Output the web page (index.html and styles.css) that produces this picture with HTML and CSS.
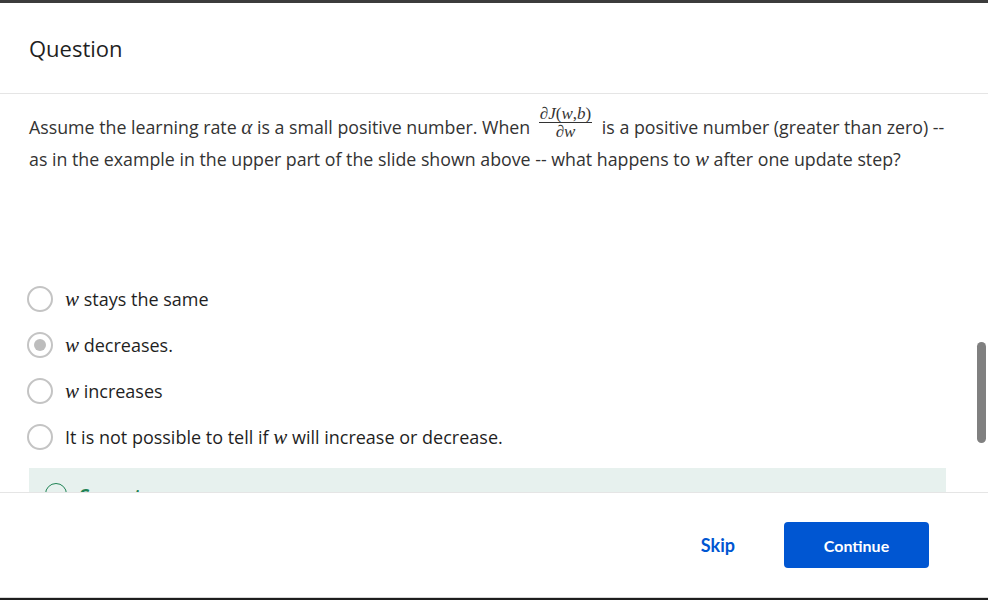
FILE: index.html
```html
<!DOCTYPE html>
<html>
<head>
<meta charset="utf-8">
<link rel="stylesheet" href="styles.css">
</head>
<body>
<div class="topbar"></div>
<div class="modal">
  <header class="modal-head">
    <h1 class="title">Question</h1>
  </header>
  <main class="modal-body">
    <p class="prompt">Assume the learning rate <span class="m">α</span> is a small positive number. When <span class="frac"><span class="num">∂<span class="mi">J</span>(<span class="mi">w</span>,<span class="mi">b</span>)</span><span class="den">∂<span class="mi">w</span></span></span> is a positive number (greater than zero) -- as in the example in the upper part of the slide shown above -- what happens to <span class="m">w</span> after one update step?</p>
    <ul class="options">
      <li class="option"><span class="radio"></span><span class="label"><span class="m">w</span> stays the same</span></li>
      <li class="option"><span class="radio checked"></span><span class="label"><span class="m">w</span> decreases.</span></li>
      <li class="option"><span class="radio"></span><span class="label"><span class="m">w</span> increases</span></li>
      <li class="option"><span class="radio"></span><span class="label">It is not possible to tell if <span class="m">w</span> will increase or decrease.</span></li>
    </ul>
    <div class="feedback">
      <span class="ok-icon"></span><span class="ok-text">Correct</span>
    </div>
    <div class="scroll-thumb"></div>
  </main>
  <footer class="modal-foot">
    <button class="skip">Skip</button>
    <button class="continue">Continue</button>
  </footer>
</div>
<div class="bottombar"></div>
</body>
</html>
```
FILE: styles.css
```css
html, body {
  margin: 0;
  padding: 0;
  height: 100%;
  background: #fff;
}
body {
  display: flex;
  flex-direction: column;
  font-family: "Open Sans", "Liberation Sans", sans-serif;
  color: #1f1f1f;
  overflow: hidden;
}
.topbar {
  height: 3px;
  background: #3c3c3c;
  flex: none;
}
.bottombar {
  height: 2px;
  background: #1e1e1e;
  border-top: 1px solid #d8d8d8;
  flex: none;
}
.modal {
  flex: 1;
  display: flex;
  flex-direction: column;
  min-height: 0;
}
.modal-head {
  height: 90px;
  border-bottom: 1px solid #e5e5e5;
  display: flex;
  align-items: center;
  padding: 0 29px;
  flex: none;
}
.title {
  margin: 0;
  font-family: "Open Sans", sans-serif;
  font-weight: 400;
  font-size: 22px;
  color: #1f1f1f;
}
.modal-body {
  flex: 1;
  min-height: 0;
  overflow: hidden;
  position: relative;
  padding: 0 40px 0 29px;
}
.prompt {
  margin: 17px 0 0;
  font-size: 17.8px;
  line-height: 32px;
  color: #333;
}
.m {
  font-family: "Liberation Serif", "DejaVu Serif", serif;
  font-style: italic;
  font-size: 21px;
  line-height: 1;
}
.mi {
  font-style: italic;
}
.frac {
  display: inline-flex;
  flex-direction: column;
  align-items: center;
  vertical-align: middle;
  font-family: "Liberation Serif", "DejaVu Serif", serif;
  font-size: 17px;
  line-height: 15px;
  margin: -10px 5px -10px 4px;
  position: relative;
  top: -7px;
}
.num {
  border-bottom: 1px solid #333;
  padding: 0 1px 1px;
}
.den {
  padding-top: 1px;
}
.options {
  list-style: none;
  margin: 110px 0 0;
  padding: 0;
  display: flex;
  flex-direction: column;
  gap: 18px;
}
.option {
  display: flex;
  align-items: center;
  gap: 12px;
  height: 28px;
}
.radio {
  width: 22px;
  height: 22px;
  border: 2px solid #c4c4c4;
  border-radius: 50%;
  display: flex;
  align-items: center;
  justify-content: center;
  flex: none;
  margin-left: -2px;
}
.radio.checked::after {
  content: "";
  width: 12px;
  height: 12px;
  border-radius: 50%;
  background: #bdbdbd;
}
.label {
  font-size: 18px;
  color: #1f1f1f;
}
.feedback {
  margin-top: 17px;
  width: 917px;
  height: 80px;
  background: #e7f1ee;
  box-sizing: border-box;
  padding: 15px 16px;
  display: flex;
  align-items: flex-start;
  gap: 12px;
}
.ok-icon {
  width: 20px;
  height: 20px;
  border: 1.5px solid #1f8354;
  border-radius: 50%;
  flex: none;
}
.ok-text {
  color: #1f8354;
  font-weight: 700;
  font-size: 17px;
  line-height: 20px;
  margin-top: 3px;
}
.scroll-thumb {
  position: absolute;
  right: 2px;
  top: 248px;
  width: 9px;
  height: 101px;
  border-radius: 5px;
  background: #808080;
}
.modal-foot {
  height: 104px;
  flex: none;
  border-top: 1px solid #e5e5e5;
  display: flex;
  align-items: center;
  justify-content: flex-end;
  padding: 0 59px 0 0;
  gap: 49px;
  background: #fff;
}
.skip {
  background: none;
  border: none;
  font-family: "Lato", sans-serif;
  font-weight: 700;
  font-size: 18px;
  color: #0056d2;
  padding: 0;
  cursor: pointer;
}
.continue {
  width: 145px;
  height: 46px;
  background: #0056d2;
  color: #fff;
  border: none;
  border-radius: 4px;
  font-family: "Lato", sans-serif;
  font-weight: 700;
  font-size: 16px;
  cursor: pointer;
}
```
